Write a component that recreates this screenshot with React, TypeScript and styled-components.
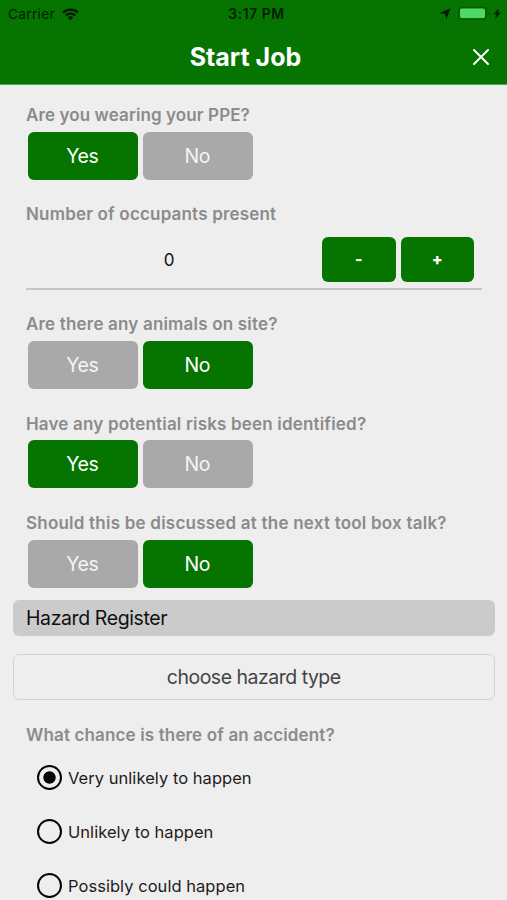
import React, { useState } from "react";
import styled, { createGlobalStyle } from "styled-components";

const GREEN = "#067400";

const GlobalStyle = createGlobalStyle`
  * { box-sizing: border-box; }
  html, body { margin: 0; padding: 0; }
  body { background: #eeeeee; overflow: hidden; }
  button { font: inherit; border: 0; padding: 0; cursor: pointer; }
`;

const Screen = styled.main`
  width: 507px;
  height: 900px;
  overflow: hidden;
  background: #eeeeee;
  font-family: Inter, "Liberation Sans", sans-serif;
  color: #111;
`;

const Header = styled.header`
  height: 85px;
  background: ${GREEN};
  border-bottom: 1px solid #5a9f56;
`;

const StatusBar = styled.div`
  display: grid;
  grid-template-columns: 1fr auto 1fr;
  align-items: center;
  height: 28px;
  padding: 0 4px 0 8px;
  font-size: 13.6px;
  line-height: 28px;
  letter-spacing: 0.35px;
  color: #031c02;
`;

const StatusSide = styled.div<{ $end?: boolean }>`
  display: flex;
  align-items: center;
  justify-content: ${(p) => (p.$end ? "flex-end" : "flex-start")};
  height: 28px;
  gap: 7px;
`;

const Clock = styled.span`
  font-weight: 600;
  font-size: 13.8px;
  letter-spacing: 0.6px;
  padding-left: 2px;
`;

const NavBar = styled.div`
  display: grid;
  grid-template-columns: 54px 1fr 54px;
  align-items: center;
  height: 56px;
`;

const Title = styled.h1`
  grid-column: 2;
  margin: 0;
  padding: 2px 16px 0 0;
  text-align: center;
  font-size: 25px;
  font-weight: 700;
  line-height: 30px;
  letter-spacing: 0;
  color: #fff;
`;

const CloseButton = styled.button`
  display: grid;
  place-items: center;
  height: 44px;
  padding: 1px 0 0 1px;
  background: transparent;
`;

const Form = styled.div`
  display: flex;
  flex-direction: column;
  padding: 20px 25px 0 26px;
`;

const Field = styled.section<{ $height: number }>`
  height: ${(p) => p.$height}px;
`;

const Label = styled.h2<{ $spacing?: number }>`
  margin: 0;
  height: 26.5px;
  font-size: 17px;
  font-weight: 600;
  line-height: 21px;
  letter-spacing: ${(p) => p.$spacing ?? 0.18}px;
  white-space: nowrap;
  color: #8b8b8b;
`;

const Choices = styled.div`
  display: flex;
  gap: 5px;
  padding-left: 2px;
`;

const Choice = styled.button<{ $active: boolean }>`
  width: 110px;
  height: 48px;
  padding-right: 1.5px;
  border-radius: 6px;
  background: ${(p) => (p.$active ? GREEN : "#a9a9a9")};
  color: ${(p) => (p.$active ? "#fff" : "#f4f4f4")};
  font-size: 19.5px;
  line-height: 48px;
  letter-spacing: -0.5px;
`;

const Stepper = styled.div`
  display: flex;
  align-items: flex-start;
  gap: 5px;
  height: 59px;
  padding: 6px 8px 0 0;
  border-bottom: 2px solid #c6c6c8;
`;

const Count = styled.output`
  flex: 1;
  padding-right: 5px;
  text-align: center;
  font-size: 17px;
  line-height: 46px;
`;

const StepButton = styled.button`
  width: 73.5px;
  height: 45px;
  border-radius: 6px;
  background: ${GREEN};
  color: #fff;
  font-size: 16px;
  font-weight: 800;
  line-height: 45px;
`;

const SectionBar = styled.h2`
  margin: 0 -12.5px 18px -13px;
  height: 36px;
  padding-left: 13px;
  border-radius: 6px;
  background: #cbcbcb;
  font-size: 19.5px;
  font-weight: 400;
  line-height: 36px;
  letter-spacing: -0.4px;
  color: #111;
`;

const SelectButton = styled.button`
  height: 46px;
  margin: 0 -12.5px 25px -13px;
  border: 1.5px solid #d3d3d3;
  border-radius: 6px;
  background: transparent;
  font-size: 19.5px;
  letter-spacing: -0.5px;
  color: #444;
`;

const Options = styled.div`
  display: flex;
  flex-direction: column;
  padding-left: 11px;
  margin-top: -0.7px;
`;

const Option = styled.label`
  display: flex;
  align-items: center;
  gap: 6px;
  height: 54px;
  font-size: 16.5px;
  letter-spacing: 0.04px;
  color: #1c1c1c;
  white-space: nowrap;
`;

const RadioInput = styled.input`
  appearance: none;
  width: 25px;
  height: 25px;
  margin: 0;
  border: 2.5px solid #050505;
  border-radius: 50%;
  background: transparent;

  &:checked {
    background: radial-gradient(circle, #050505 5.8px, transparent 6.5px);
  }
`;

const WifiIcon = () => (
  <svg width="17" height="13" viewBox="0 0 17 13" fill="none" stroke="#031c02" strokeWidth="2.4">
    <path d="M1 4.5C5.2.6 11.8.6 16 4.5M3.7 7.4c2.7-2.4 6.9-2.4 9.6 0" />
    <path d="M8.5 12.2 5.7 9.4c1.6-1.4 4-1.4 5.6 0z" fill="#031c02" stroke="none" />
  </svg>
);

const PowerIcons = () => (
  <svg width="64" height="16" viewBox="0 0 64 16" fill="none">
    <path d="M0 7.2 11.6 2.2 7.2 13.6 6.2 8z" fill="#031c02" />
    <rect x="19.8" y="1.3" width="27.4" height="12" rx="3.2" stroke="#075505" strokeWidth="1.3" />
    <rect x="21" y="2.5" width="25" height="9.6" rx="1.8" fill="#4cd964" />
    <path d="M49.3 5.5c1.6.5 1.6 3 0 3.5z" fill="#075505" />
    <path d="m60 2.2-5.4 6h2.9l-1.5 5 5.9-6.6H59z" fill="#031c02" />
  </svg>
);

const CloseIcon = () => (
  <svg width="18" height="18" viewBox="0 0 18 18" stroke="#fff" strokeWidth="2" strokeLinecap="round">
    <path d="m2 2 14 14M16 2 2 16" />
  </svg>
);

interface YesNoProps {
  question: string;
  initial: "Yes" | "No";
  height: number;
  spacing?: number;
}

function YesNo({ question, initial, height, spacing }: YesNoProps) {
  const [value, setValue] = useState(initial);
  return (
    <Field $height={height}>
      <Label $spacing={spacing}>{question}</Label>
      <Choices>
        {(["Yes", "No"] as const).map((name) => (
          <Choice key={name} $active={value === name} onClick={() => setValue(name)}>
            {name}
          </Choice>
        ))}
      </Choices>
    </Field>
  );
}

const CHANCES = ["Very unlikely to happen", "Unlikely to happen", "Possibly could happen"];

export default function App() {
  const [count, setCount] = useState(0);
  const [chance, setChance] = useState(CHANCES[0]);

  return (
    <>
      <GlobalStyle />
      <Screen>
        <Header>
          <StatusBar>
            <StatusSide>
              Carrier
              <WifiIcon />
            </StatusSide>
            <Clock>3:17 PM</Clock>
            <StatusSide $end>
              <PowerIcons />
            </StatusSide>
          </StatusBar>
          <NavBar>
            <Title>Start Job</Title>
            <CloseButton aria-label="Close">
              <CloseIcon />
            </CloseButton>
          </NavBar>
        </Header>
        <Form>
          <YesNo question="Are you wearing your PPE?" initial="Yes" height={99.4} spacing={0.1} />
          <Field $height={110}>
            <Label>Number of occupants present</Label>
            <Stepper>
              <Count>{count}</Count>
              <StepButton onClick={() => setCount(Math.max(0, count - 1))}>-</StepButton>
              <StepButton onClick={() => setCount(count + 1)}>+</StepButton>
            </Stepper>
          </Field>
          <YesNo question="Are there any animals on site?" initial="No" height={99.4} />
          <YesNo question="Have any potential risks been identified?" initial="Yes" height={99.4} />
          <YesNo question="Should this be discussed at the next tool box talk?" initial="No" height={86.8} spacing={0.22} />
          <SectionBar>Hazard Register</SectionBar>
          <SelectButton>choose hazard type</SelectButton>
          <Label $spacing={0.14}>What chance is there of an accident?</Label>
          <Options>
            {CHANCES.map((name) => (
              <Option key={name}>
                <RadioInput
                  type="radio"
                  name="chance"
                  checked={chance === name}
                  onChange={() => setChance(name)}
                />
                {name}
              </Option>
            ))}
          </Options>
        </Form>
      </Screen>
    </>
  );
}
